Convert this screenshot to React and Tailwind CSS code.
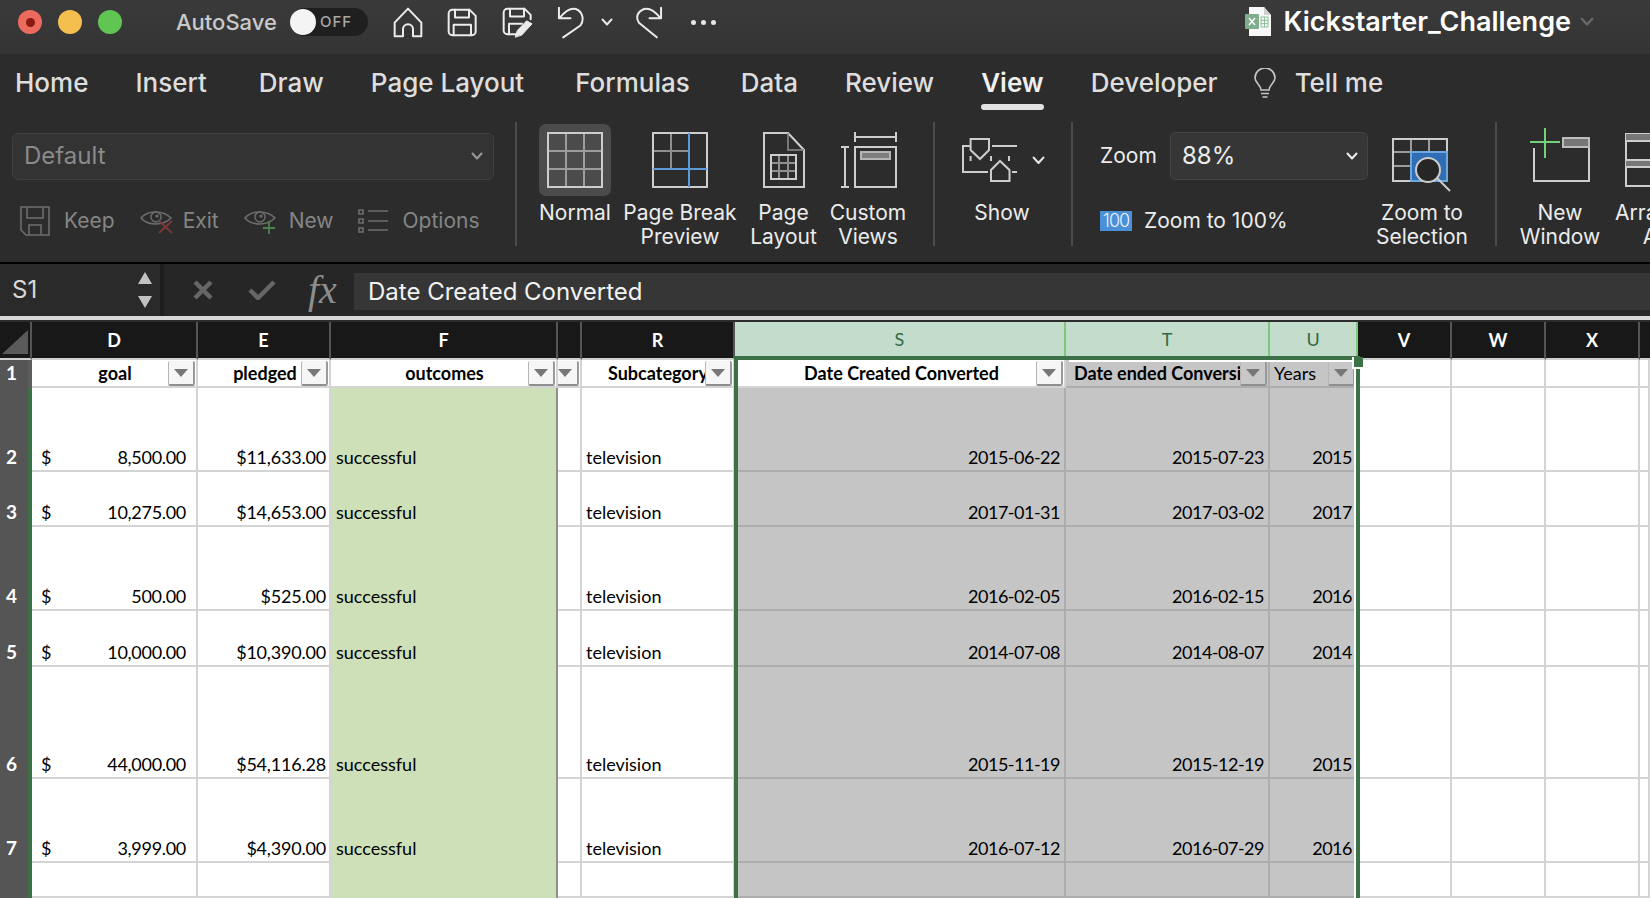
import React from "react";

const rows = [
  { n: 2, h: "h-[84px]", goal: "8,500.00", pledged: "$11,633.00", start: "2015-06-22", end: "2015-07-23", year: "2015" },
  { n: 3, h: "h-[55px]", goal: "10,275.00", pledged: "$14,653.00", start: "2017-01-31", end: "2017-03-02", year: "2017" },
  { n: 4, h: "h-[84px]", goal: "500.00", pledged: "$525.00", start: "2016-02-05", end: "2016-02-15", year: "2016" },
  { n: 5, h: "h-[56px]", goal: "10,000.00", pledged: "$10,390.00", start: "2014-07-08", end: "2014-08-07", year: "2014" },
  { n: 6, h: "h-[112px]", goal: "44,000.00", pledged: "$54,116.28", start: "2015-11-19", end: "2015-12-19", year: "2015" },
  { n: 7, h: "h-[84px]", goal: "3,999.00", pledged: "$4,390.00", start: "2016-07-12", end: "2016-07-29", year: "2016" },
];

const gridCols =
  "grid grid-cols-[32px_166px_133px_227px_24px_153px_331px_204px_88px_94px_94px_94px_10px]";

// ---- title bar icons, drawn on the coordinates of the zoomed toolbar
function TitleIcon({ box, w, h, children }) {
  return (
    <svg viewBox={box} width={w} height={h} fill="none" stroke="#ececec" strokeWidth="6" strokeLinecap="round" strokeLinejoin="round" className="shrink-0">
      {children}
    </svg>
  );
}

const HomeIcon = () => (
  <TitleIcon box="40 15 90 93" w={30} h={31}>
    <path d="M45 103V62L85 20L125 62V103H100V82A15 15 0 0 0 70 82V103Z" />
  </TitleIcon>
);

const SaveIcon = () => (
  <TitleIcon box="202 22 90 86" w={30} h={29}>
    <path d="M218 27H270L288 45V92A11 11 0 0 1 277 103H218A11 11 0 0 1 207 92V38A11 11 0 0 1 218 27Z" />
    <path d="M226 27V50H268V27M222 103V72H274V103" />
  </TitleIcon>
);

const SaveAsIcon = () => (
  <TitleIcon box="364 22 93 92" w={31} h={31}>
    <path d="M410 103H380A11 11 0 0 1 369 92V38A11 11 0 0 1 380 27H432L450 45V58" />
    <path d="M388 27V50H430V27M385 103V72H424" />
    <path d="M404 111L410 92L438 63L454 72L424 105Z" fill="#ececec" strokeWidth="3" />
  </TitleIcon>
);

const UndoIcon = () => (
  <TitleIcon box="532 15 80 100" w={27} h={33}>
    <path d="M537 20V52H572M540 50C555 32 572 20 588 24C610 32 614 58 602 74L550 110" />
  </TitleIcon>
);

const RedoIcon = () => (
  <TitleIcon box="768 15 80 100" w={27} h={33}>
    <path d="M843 20V52H808M840 50C825 32 808 20 792 24C770 32 766 50 776 66L830 110" />
  </TitleIcon>
);

const Chevron = ({ color = "#e6e6e6", w = 12 }) => (
  <svg viewBox="0 0 12 8" width={w} height={(w * 2) / 3} fill="none" stroke={color} strokeWidth="2" strokeLinecap="round" strokeLinejoin="round" className="shrink-0">
    <path d="M1.5 1.5L6 6.5L10.5 1.5" />
  </svg>
);

const ExcelIcon = () => (
  <svg viewBox="0 0 27 30" width="27" height="30" className="shrink-0">
    <path d="M4 0H19L26 8V29H4Z" fill="#f7f7f7" />
    <path d="M19 0V8H26Z" fill="#cfcfcf" />
    <rect x="0" y="7" width="14" height="15" rx="1" fill="#7fae8c" />
    <path d="M4 11L10 18M10 11L4 18" stroke="#fff" strokeWidth="1.5" />
    <path d="M16 10H23V20H16ZM16 13.3H23M16 16.6H23M19.5 10V20" fill="none" stroke="#8fbf9a" strokeWidth="1" />
  </svg>
);

const BulbIcon = () => (
  <svg viewBox="0 0 24 31" width="24" height="31" fill="none" stroke="#c6c6c6" strokeWidth="1.6" className="shrink-0">
    <path d="M8 22C8 17 2 15 2 10A10 10 0 0 1 22 10C22 15 16 17 16 22Z" />
    <path d="M8 25.5H16M9.5 29H14.5" />
  </svg>
);

// ---- ribbon icons
const line = "#cdcdcd";

const NormalIcon = () => (
  <svg viewBox="0 0 56 56" width="56" height="56" fill="none" className="shrink-0">
    <path d="M19 1V55M37 1V55M1 19H55M1 37H55" stroke="#9c9c9c" strokeWidth="2" />
    <rect x="1" y="1" width="54" height="54" stroke={line} strokeWidth="2" />
  </svg>
);

const PageBreakIcon = () => (
  <svg viewBox="0 0 56 56" width="56" height="56" fill="none" className="shrink-0">
    <path d="M19 1V37M1 19H37" stroke="#8f8f8f" strokeWidth="2" />
    <rect x="1" y="1" width="54" height="54" stroke={line} strokeWidth="2" />
    <path d="M37 1V55M1 37H55" stroke="#5a9bd8" strokeWidth="2" />
  </svg>
);

const PageLayoutIcon = () => (
  <svg viewBox="0 0 42 56" width="42" height="56" fill="none" className="shrink-0">
    <path d="M1 1H25L41 18V55H1Z" stroke={line} strokeWidth="2" />
    <path d="M25 1V18H41" stroke="#8f8f8f" strokeWidth="1.5" />
    <path d="M16 23V47M25 23V47M8 31H33M8 39H33" stroke="#8f8f8f" strokeWidth="2" />
    <rect x="8" y="23" width="25" height="24" stroke={line} strokeWidth="2" />
  </svg>
);

const CustomViewsIcon = () => (
  <svg viewBox="0 0 57 56" width="57" height="56" fill="none" className="shrink-0">
    <path d="M15 0V10M56 0V10M15 5H56" stroke={line} strokeWidth="2" />
    <path d="M1 15H9M1 55H9M5 15V55" stroke={line} strokeWidth="2" />
    <rect x="15" y="15" width="41" height="40" stroke={line} strokeWidth="2" />
    <rect x="21" y="20" width="29" height="7" fill="#7e7e7e" stroke="#b5b5b5" strokeWidth="2" />
  </svg>
);

const ShowIcon = () => (
  <svg viewBox="0 0 56 44" width="56" height="44" fill="none" stroke={line} strokeWidth="2" className="shrink-0">
    <path d="M8.6 1H27V12L18 21L8.6 12Z" />
    <path d="M30 8H55M8.6 8H1V34H26" />
    <path d="M29 43V32L38 23L47.5 32V43Z" />
    <path d="M8.6 18V23M29 18V23M47 18V23M50 34H55" />
  </svg>
);

const ZoomSelIcon = () => (
  <svg viewBox="0 0 60 54" width="60" height="54" fill="none" className="shrink-0">
    <path d="M19 14H55V43H19Z" fill="#2f6db5" stroke="#6fa8dc" strokeWidth="2" />
    <path d="M19 1V14M37 1V14M1 14H19M1 28H19" stroke="#9c9c9c" strokeWidth="2" />
    <rect x="1" y="1" width="54" height="42" stroke={line} strokeWidth="2" />
    <path d="M19 14H55V43H19Z" stroke="#6fa8dc" strokeWidth="2" />
    <circle cx="36" cy="32" r="12" fill="#262626" stroke={line} strokeWidth="2" />
    <path d="M45 40L58 53" stroke={line} strokeWidth="2" />
  </svg>
);

const NewWindowIcon = () => (
  <svg viewBox="0 0 60 54" width="60" height="54" fill="none" className="shrink-0">
    <path d="M4 20V53H59V10" stroke={line} strokeWidth="2" />
    <rect x="33" y="10" width="26" height="9" fill="#777" stroke="#bdbdbd" strokeWidth="2" />
    <path d="M15 0V30M0 14H30" stroke="#74d07a" strokeWidth="2" />
  </svg>
);

const ArrangeIcon = () => (
  <svg viewBox="0 0 60 54" width="60" height="54" fill="none" className="shrink-0">
    <rect x="1" y="1" width="58" height="52" stroke={line} strokeWidth="2" />
    <rect x="1" y="1" width="58" height="7" fill="#777" />
    <rect x="1" y="27" width="58" height="7" fill="#777" />
    <path d="M1 8H59M1 27H59M1 34H59" stroke={line} strokeWidth="2" />
  </svg>
);

const KeepIcon = () => (
  <svg viewBox="0 0 30 30" width="30" height="30" fill="none" stroke="#6d6d6d" strokeWidth="1.6" className="shrink-0">
    <path d="M1 1H29V29H6L1 24Z" />
    <path d="M7 1V12H23V1M9 29V19H21V29" />
  </svg>
);

const EyeIcon = ({ mark }) => (
  <svg viewBox="0 0 33 26" width="33" height="26" fill="none" className="shrink-0">
    <path d="M1 10C8 2 23 2 31 10C23 18 8 18 1 10Z" stroke="#6d6d6d" strokeWidth="1.6" />
    <circle cx="16" cy="9" r="5" stroke="#6d6d6d" strokeWidth="1.4" />
    <circle cx="17" cy="8" r="1.6" fill="#6d6d6d" />
    {mark === "x" ? (
      <path d="M19 13L32 25M32 13L19 25" stroke="#7c3a36" strokeWidth="1.8" />
    ) : (
      <path d="M25 13V26M19 20H31" stroke="#4f8050" strokeWidth="1.8" />
    )}
  </svg>
);

const OptionsIcon = () => (
  <svg viewBox="0 0 31 24" width="31" height="24" fill="none" stroke="#6d6d6d" strokeWidth="1.6" className="shrink-0">
    <path d="M1 1H5V5H1ZM1 10H5V14H1ZM1 19H5V23H1ZM10 2H30M10 12H30M10 21H30" />
  </svg>
);

// ---- ribbon pieces
const Sep = () => <div className="mt-[4px] h-[124px] w-[2px] shrink-0 bg-[#4c4c4c]" />;

function RibbonBtn({ w, top, icon, label, active }) {
  return (
    <div className={`${w} mt-[6px] flex shrink-0 flex-col items-center`}>
      <div className={`${top} flex h-[77px] w-full justify-center`}>
        {active ? (
          <div className="flex h-[72px] w-[72px] items-center justify-center rounded-[7px] bg-[#4b4b4b]">{icon}</div>
        ) : (
          icon
        )}
      </div>
      <div className="whitespace-pre text-center text-[21px] leading-[24px] text-[#ececec]">{label}</div>
    </div>
  );
}

function GreyAction({ icon, label, gap, className }) {
  return (
    <div className={`flex items-center ${gap} ${className}`}>
      {icon}
      <span className="text-[21px] text-[#858585]">{label}</span>
    </div>
  );
}

// ---- sheet pieces
function FilterBtn({ grey, right = "right-[1px]" }) {
  return (
    <div
      className={`absolute top-[1px] ${right} flex h-[25px] w-[27px] items-center justify-center rounded-[2px] border border-t-0 border-r-2 border-b-2 border-l-[#b5b5b5] border-r-[#9a9a9a] border-b-[#8f8f8f] ${
        grey ? "bg-[#c8c8c8]" : "bg-[#f6f6f6]"
      }`}
    >
      <div className="h-0 w-0 border-x-[7px] border-t-[8px] border-x-transparent border-t-[#777777]" />
    </div>
  );
}

function ColHead({ label, selected, last }) {
  if (selected) {
    return (
      <div className="flex items-center justify-center border-r-2 border-[#7fc77f] bg-[#c3dccb] pb-[3px] text-[18px] text-[#2f6b46]">
        {label}
      </div>
    );
  }
  return (
    <div className={`flex items-center justify-center border-b-2 border-b-[#d0d0d0] bg-[#181818] text-[18px] font-bold text-white ${last ? "" : "border-r-2 border-r-[#555555]"}`}>
      {label}
    </div>
  );
}

function HeadCell({ children, align = "justify-center", className = "", grey, filterRight }) {
  return (
    <div className={`relative flex items-center overflow-hidden whitespace-nowrap border-r-2 border-b-2 text-[18px] font-bold leading-[24px] text-black ${align} ${grey ? "border-[#adadad] bg-[#c5c5c5]" : "border-[#d4d4d4] bg-white"} ${className}`}>
      {children}
      <FilterBtn grey={grey} right={filterRight} />
    </div>
  );
}

function Cell({ children, className = "" }) {
  return <div className={`flex items-end whitespace-nowrap border-r-2 border-b-2 pb-[1px] text-[18px] leading-[24px] text-black ${className}`}>{children}</div>;
}

const plain = "border-[#d4d4d4] bg-white";
const sel = "border-[#adadad] bg-[#c5c5c5] justify-end pr-[4px] tracking-[-0.5px]";

function DataRow({ row }) {
  const { n, h, goal, pledged, start, end, year } = row;
  return (
    <div className={`${gridCols} ${h}`}>
      <div className="flex items-end border-r-4 border-[#3c7148] bg-[#555555] pb-[3px] pl-[6px] text-[19px] font-bold leading-[24px] text-white">{n}</div>
      <Cell className={`${plain} justify-between pr-[10px] pl-[9px] tracking-[-0.3px]`}>
        {goal && <span>$</span>}
        <span>{goal}</span>
      </Cell>
      <Cell className={`${plain} justify-end pr-[3px] tracking-[-0.2px]`}>{pledged}</Cell>
      <div className="flex items-end border-r-2 border-[#8f8f8f] bg-[#cde0b8] pb-[3px] pl-[5px] text-[18px] leading-[24px] text-black">{goal && "successful"}</div>
      <Cell className={plain} />
      <Cell className={`${plain} pl-[4px]`}>{goal && "television"}</Cell>
      <Cell className={sel}>{start}</Cell>
      <Cell className={sel}>{end}</Cell>
      <Cell className={sel}>{year}</Cell>
      <Cell className={plain} />
      <Cell className={plain} />
      <Cell className={plain} />
      <Cell className={plain} />
    </div>
  );
}

function Sheet() {
  return (
    <div className="relative flex-1 overflow-hidden bg-white [font-family:Lato,sans-serif]">
      <div className={`${gridCols} h-[38px]`}>
        <div className="relative border-r-2 border-b-2 border-r-[#555555] border-b-[#d0d0d0] bg-[#181818]">
          <svg viewBox="0 0 26 24" width="26" height="24" className="absolute top-[8px] left-[2px]">
            <path d="M0 24H26V0Z" fill="#5a5a5a" />
          </svg>
        </div>
        <ColHead label="D" />
        <ColHead label="E" />
        <ColHead label="F" />
        <ColHead label="" />
        <ColHead label="R" />
        <ColHead label="S" selected />
        <ColHead label="T" selected />
        <ColHead label="U" selected />
        <ColHead label="V" />
        <ColHead label="W" />
        <ColHead label="X" />
        <ColHead label="" last />
      </div>
      <div className={`${gridCols} h-[28px]`}>
        <div className="flex items-center border-r-4 border-[#5d5d5d] bg-[#555555] pb-[3px] pl-[6px] text-[19px] font-bold leading-[24px] text-white">1</div>
        <HeadCell className="pl-[2px]">goal</HeadCell>
        <HeadCell className="pl-[3px]">pledged</HeadCell>
        <HeadCell className="pl-[2px]">outcomes</HeadCell>
        <HeadCell />
        <HeadCell align="justify-start" className="pl-[26px]">Subcategory</HeadCell>
        <HeadCell className="pl-[4px]">Date Created Converted</HeadCell>
        <HeadCell grey align="justify-start" className="pl-[8px]">Date ended Conversion</HeadCell>
        <HeadCell grey align="justify-start" className="pl-[4px]">
          <span className="font-normal">Years</span>
        </HeadCell>
        <Cell className={plain} />
        <Cell className={plain} />
        <Cell className={plain} />
        <Cell className={plain} />
      </div>
      {rows.map((r) => (
        <DataRow key={r.n} row={r} />
      ))}
      <DataRow row={{ n: "", h: "h-[35px]" }} />

      {/* selection outline over columns S:U */}
      <div className="pointer-events-none absolute top-[34px] left-[734px] h-[560px] w-[626px] border-x-4 border-t-4 border-[#3c7148]">
        <div className="absolute top-0 right-0 h-full w-[2px] bg-white" />
        <div className="absolute top-0 right-0 left-[331px] h-[2px] bg-white" />
      </div>
      <div className="absolute top-[35px] left-[1352px] h-[12px] w-[11px] border-b-2 border-l-2 border-white bg-[#3c7148]" />
    </div>
  );
}

export default function App() {
  return (
    <div className="flex h-screen w-full flex-col overflow-hidden bg-[#2c2c2c] [font-family:Inter,sans-serif]">
      {/* title bar */}
      <div className="flex h-[54px] shrink-0 items-center bg-gradient-to-b from-[#3a3a3a] to-[#343434] pr-[56px] pb-[10px] pl-[18px]">
        <div className="flex items-center justify-center h-[24px] w-[24px] rounded-full bg-[#ec6a5e]">
          <div className="h-[9px] w-[9px] rounded-full bg-[#8c1a12]" />
        </div>
        <div className="ml-[16px] h-[24px] w-[24px] rounded-full bg-[#f4bf4f]" />
        <div className="ml-[16px] h-[24px] w-[24px] rounded-full bg-[#61c554]" />
        <span className="ml-[54px] w-[100px] whitespace-nowrap text-[22px] font-medium text-[#c9c9c9]">AutoSave</span>
        <div className="ml-[14px] flex h-[28px] w-[78px] items-center rounded-full bg-[#1f1f1f]">
          <div className="h-[26px] w-[26px] rounded-full bg-[#f4f4f4]" />
          <span className="ml-[4px] text-[15px] font-medium tracking-[1px] text-[#a8a8a8]">OFF</span>
        </div>
        <div className="ml-[25px]"><HomeIcon /></div>
        <div className="ml-[24px]"><SaveIcon /></div>
        <div className="ml-[25px]"><SaveAsIcon /></div>
        <div className="ml-[24px]"><UndoIcon /></div>
        <div className="ml-[17px]"><Chevron w={12} /></div>
        <div className="ml-[23px]"><RedoIcon /></div>
        <div className="ml-[28px] flex gap-[5px]">
          <div className="h-[5px] w-[5px] rounded-full bg-[#e6e6e6]" />
          <div className="h-[5px] w-[5px] rounded-full bg-[#e6e6e6]" />
          <div className="h-[5px] w-[5px] rounded-full bg-[#e6e6e6]" />
        </div>
        <div className="ml-auto flex items-center">
          <ExcelIcon />
          <span className="ml-[11px] whitespace-nowrap text-[27px] font-semibold text-white">Kickstarter_Challenge</span>
          <div className="ml-[9px]"><Chevron color="#6a6a6a" w={14} /></div>
        </div>
      </div>

      {/* tabs */}
      <div className="flex h-[64px] shrink-0 items-start bg-[#2c2c2c] pt-[13px] pl-[15px] text-[26px] font-medium leading-[32px] text-[#dedede]">
        <span>Home</span>
        <span className="ml-[47px]">Insert</span>
        <span className="ml-[52px]">Draw</span>
        <span className="ml-[47px]">Page Layout</span>
        <span className="ml-[51px]">Formulas</span>
        <span className="ml-[51px]">Data</span>
        <span className="ml-[47px]">Review</span>
        <span className="ml-[47px] flex flex-col items-stretch font-semibold text-[#f0f0f0]">
          View
          <span className="mt-[5px] h-[6px] rounded-full bg-[#e2e2e2]" />
        </span>
        <span className="ml-[47px]">Developer</span>
        <div className="ml-[35px] mt-[1px]"><BulbIcon /></div>
        <span className="ml-[18px]">Tell me</span>
      </div>

      {/* ribbon */}
      <div className="flex h-[144px] shrink-0 items-start overflow-hidden bg-[#2c2c2c]">
        <div className="w-[515px] shrink-0 pt-[15px] pl-[12px]">
          <div className="flex h-[47px] w-[482px] items-center justify-between rounded-[6px] border border-[#3f3f3f] bg-[#333333] pr-[10px] pb-[1px] pl-[11px] text-[24px] text-[#8a8a8a]">
            Default
            <Chevron color="#9a9a9a" />
          </div>
          <div className="mt-[25px] flex h-[32px] items-center pl-[8px]">
            <GreyAction icon={<KeepIcon />} label="Keep" gap="gap-[14px]" />
            <GreyAction icon={<EyeIcon mark="x" />} label="Exit" gap="gap-[10px]" className="ml-[25px]" />
            <GreyAction icon={<EyeIcon mark="plus" />} label="New" gap="gap-[12px]" className="ml-[25px]" />
            <GreyAction icon={<OptionsIcon />} label="Options" gap="gap-[14px]" className="ml-[24px]" />
          </div>
        </div>
        <Sep />
        <div className="w-[22px] shrink-0" />
        <RibbonBtn w="w-[72px]" top="" active icon={<NormalIcon />} label="Normal" />
        <div className="w-[9px] shrink-0" />
        <RibbonBtn w="w-[120px]" top="pt-[8px]" icon={<PageBreakIcon />} label={"Page Break\nPreview"} />
        <RibbonBtn w="w-[87px]" top="pt-[8px]" icon={<PageLayoutIcon />} label={"Page\nLayout"} />
        <RibbonBtn w="w-[82px]" top="pt-[8px]" icon={<CustomViewsIcon />} label={"Custom\nViews"} />
        <div className="w-[24px] shrink-0" />
        <Sep />
        <div className="mt-[6px] w-[136px] shrink-0">
          <div className="flex h-[77px] items-start pt-[14px] pl-[27px]">
            <ShowIcon />
            <div className="mt-[18px] ml-[14px]"><Chevron w={13} /></div>
          </div>
          <div className="pr-[2px] text-center text-[21px] leading-[24px] text-[#ececec]">Show</div>
        </div>
        <Sep />
        <div className="w-[296px] shrink-0 pt-[14px] pl-[27px] text-[#ececec]">
          <div className="flex items-center">
            <span className="w-[55px] text-[21px]">Zoom</span>
            <div className="ml-[15px] flex h-[48px] w-[198px] items-center justify-between rounded-[6px] border border-[#454545] bg-[#363636] pr-[9px] pl-[11px] text-[24px]">
              88%
              <Chevron color="#ececec" />
            </div>
          </div>
          <div className="mt-[25px] flex items-center">
            <div className="flex h-[20px] w-[32px] items-center justify-center bg-[#4a90d9] text-[18px] font-light tracking-[-1px] text-[#e8f2fc]">100</div>
            <span className="ml-[12px] whitespace-nowrap text-[21px]">Zoom to 100%</span>
          </div>
        </div>
        <RibbonBtn w="w-[106px]" top="pt-[14px]" icon={<ZoomSelIcon />} label={"Zoom to\nSelection"} />
        <div className="w-[20px] shrink-0" />
        <Sep />
        <div className="w-[13px] shrink-0" />
        <RibbonBtn w="w-[100px]" top="pt-[4px]" icon={<NewWindowIcon />} label={"New\nWindow"} />
        <RibbonBtn w="w-[90px]" top="pt-[9px]" icon={<ArrangeIcon />} label={"Arrange\nAll"} />
      </div>

      {/* formula bar */}
      <div className="h-[2px] shrink-0 bg-black" />
      <div className="flex h-[52px] shrink-0 items-stretch bg-[#262626]">
        <div className="flex w-[160px] shrink-0 items-center justify-between bg-[#2a2a2a] pr-[8px] pl-[12px] text-[24px] text-[#d8d8d8]">
          S1
          <div className="flex flex-col gap-[12px]">
            <div className="h-0 w-0 border-x-[7px] border-b-[12px] border-x-transparent border-b-[#c2c2c2]" />
            <div className="h-0 w-0 border-x-[7px] border-t-[12px] border-x-transparent border-t-[#c2c2c2]" />
          </div>
        </div>
        <div className="w-[4px] shrink-0 bg-[#1e1e1e]" />
        <div className="flex w-[190px] shrink-0 items-center">
          <svg viewBox="0 0 20 20" width="20" height="20" className="ml-[29px] shrink-0" stroke="#666" strokeWidth="4.5" fill="none">
            <path d="M2 2L18 18M18 2L2 18" />
          </svg>
          <svg viewBox="0 0 28 20" width="28" height="20" className="ml-[35px] shrink-0" stroke="#666" strokeWidth="4.5" fill="none">
            <path d="M2 10L10 18L26 2" />
          </svg>
          <span className="ml-[32px] text-[40px] italic text-[#8d8d8d] [font-family:'Liberation_Serif',serif]">fx</span>
        </div>
        <div className="mt-[9px] mb-[6px] flex flex-1 items-center bg-[#363636] pl-[14px] text-[24px] text-[#f2f2f2]">Date Created Converted</div>
      </div>
      <div className="h-[4px] shrink-0 bg-[#d8d8d8]" />
      <div className="h-[2px] shrink-0 bg-[#2c2c2c]" />
      <Sheet />
    </div>
  );
}
